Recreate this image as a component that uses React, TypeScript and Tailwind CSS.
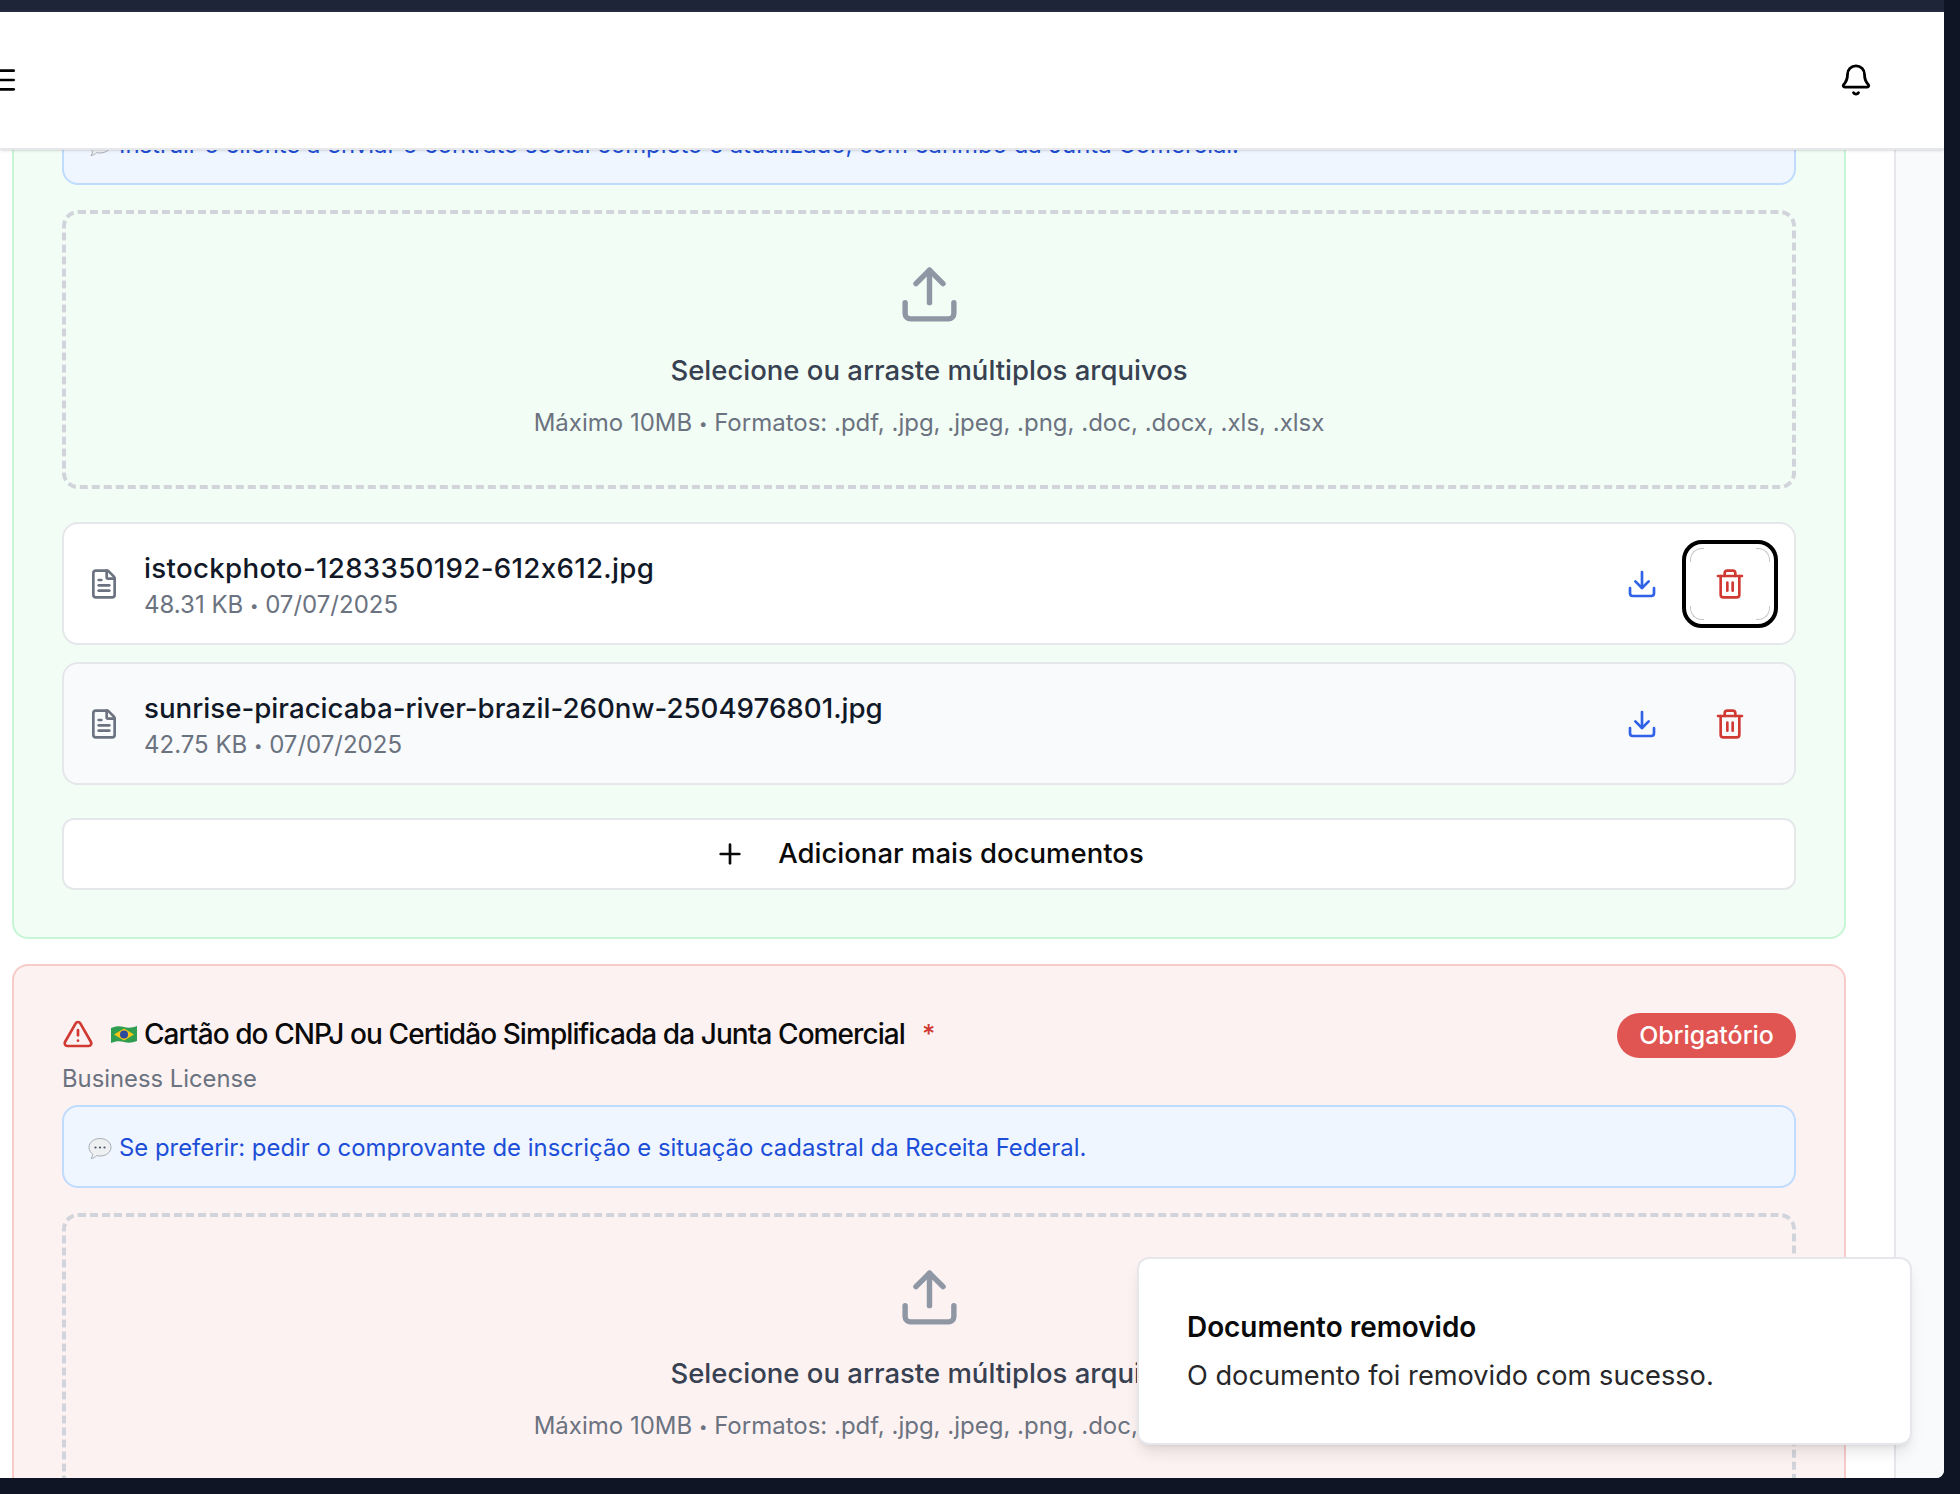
import { Bell, Download, FileText, Menu, Plus, Trash2, TriangleAlert, Upload } from "lucide-react";

const files = [
  { name: "istockphoto-1283350192-612x612.jpg", size: "48.31 KB", date: "07/07/2025", focused: true },
  { name: "sunrise-piracicaba-river-brazil-260nw-2504976801.jpg", size: "42.75 KB", date: "07/07/2025", focused: false },
];

function SpeechBubble() {
  return (
    <svg width="24" height="24" viewBox="0 0 24 24" className="shrink-0">
      <path d="M12 2.500c6 0 11 3.800 11 8.800s-5 8.700-11 8.700c-1.200 0-2.300-.1-3.300-.4-1.400 1.500-3.400 2.600-5.700 2.900 1-1.200 1.600-2.600 1.700-4.300C2.500 16.600 1 14.100 1 11.300 1 6.300 6 2.500 12 2.500z" fill="#eef0f2" stroke="#a8aeb5" strokeWidth="1" />
      <circle cx="7.500" cy="11.500" r="1.100" fill="#4b5563" />
      <circle cx="12" cy="11.500" r="1.100" fill="#4b5563" />
      <circle cx="16.500" cy="11.500" r="1.100" fill="#4b5563" />
    </svg>
  );
}

function BrazilFlag() {
  return (
    <svg width="26" height="19" viewBox="0 0 26 19" className="shrink-0">
      <path d="M0 3c5-2 9-2 13-1s8 1 13-1v15c-5 2-9 2-13 1s-8-1-13 1z" fill="#2f9e4f" />
      <path d="M13 3.500 23 9.500 13 15.500 3 9.500z" fill="#f5c518" />
      <circle cx="13" cy="9.500" r="4" fill="#2b4a9b" />
    </svg>
  );
}

function Dot() {
  return <span className="text-[15px] align-[2px]">•</span>;
}

function DropZone() {
  return (
    <div className="flex h-[279px] shrink-0 flex-col items-center rounded-2xl border-4 border-dashed border-[#d1d5db] pt-[48px]">
      <Upload size={65} strokeWidth={2} className="text-[#8f97a5]" />
      <p className="mt-[25px] text-[27.500px] leading-[36px] font-medium text-[#374151]">
        Selecione ou arraste múltiplos arquivos
      </p>
      <p className="mt-[17px] text-[24px] leading-[36px] text-[#6b7280]">
        Máximo 10MB <Dot /> Formatos: .pdf, .jpg, .jpeg, .png, .doc, .docx, .xls, .xlsx
      </p>
    </div>
  );
}

function CornerMarks() {
  return (
    <>
      <span className="absolute top-0 left-0 size-[14px] rounded-tl-xl border-t border-l border-[#c8c8c8]" />
      <span className="absolute top-0 right-0 size-[14px] rounded-tr-xl border-t border-r border-[#c8c8c8]" />
      <span className="absolute bottom-0 left-0 size-[14px] rounded-bl-xl border-b border-l border-[#c8c8c8]" />
      <span className="absolute right-0 bottom-0 size-[14px] rounded-br-xl border-r border-b border-[#c8c8c8]" />
    </>
  );
}

function FileRow({ name, size, date, focused }: { name: string; size: string; date: string; focused: boolean }) {
  return (
    <div className={`flex h-[123px] items-center rounded-2xl border-2 border-[#e5e7eb] px-[24px] ${focused ? "bg-white" : "bg-[#f9fafb]"}`}>
      <FileText size={32} className="shrink-0 text-[#6b7280]" />
      <div className="ml-[24px] flex-1 pt-[6px]">
        <p className={`text-[27.700px] leading-[36px] font-medium text-[#111827] ${focused ? "tracking-[0.3px]" : ""}`}>{name}</p>
        <p className="mt-[1px] text-[24px] leading-[36px] text-[#6b7280]">
          {size} <Dot /> {date}
        </p>
      </div>
      <div className="flex gap-2">
        <button className="flex h-[72px] w-[80px] items-center justify-center text-[#2f62e6]">
          <Download size={32} />
        </button>
        <button className={`relative flex h-[72px] w-[80px] items-center justify-center rounded-xl text-[#d03a33] ${focused ? "outline-4 outline-offset-4 outline-black" : ""}`}>
          <Trash2 size={32} />
          {focused && <CornerMarks />}
        </button>
      </div>
    </div>
  );
}

export default function App() {
  return (
    <div className="relative h-[1494px] w-[1960px] overflow-hidden bg-[#0f1524] pr-4 pb-4 font-['Inter',sans-serif] [font-feature-settings:'calt'_0]">
      <div className="h-3 border-b-2 border-[#262c3e] bg-[#1e2538]" />
      <div className="relative flex h-[1466px] flex-col overflow-hidden rounded-br-lg bg-white">
        <header className="relative z-10 flex h-[138px] shrink-0 items-center justify-between border-b-2 border-[#e5e7eb] bg-white pr-[71px] shadow-sm">
          <Menu size={32} className="-ml-[13px] text-black" />
          <Bell size={34} className="text-black" />
        </header>

        <div className="flex min-h-0 flex-1">
          <main className="w-[1894px] shrink-0 pr-[48px] pl-3">
            <section className="-mt-[50px] flex flex-col rounded-b-2xl border-2 border-[#c6f6d5] bg-[#f2fdf5] px-12 pb-[47px]">
              <div className="flex h-[83px] items-center gap-[7px] rounded-2xl border-2 border-[#bfdbfe] bg-[#eff6ff] px-6 pt-[2px]">
                <SpeechBubble />
                <span className="text-[23.880px] text-[#1d4ed8]">
                  Instruir o cliente a enviar o contrato social completo e atualizado, com carimbo da Junta Comercial.
                </span>
              </div>
              <div className="mt-[25px]">
                <DropZone />
              </div>
              <div className="mt-[33px] flex flex-col gap-[17px]">
                {files.map((file) => (
                  <FileRow key={file.name} {...file} />
                ))}
              </div>
              <button className="mt-[33px] flex h-[72px] items-center justify-center gap-8 rounded-xl border-2 border-[#e5e7eb] bg-white text-[27.500px] font-medium text-[#0a0a0a]">
                <Plus size={32} />
                Adicionar mais documentos
              </button>
            </section>

            <section className="mt-[25px] flex flex-col rounded-2xl border-2 border-[#f8caca] bg-[#fdf2f2] px-12 pt-[47px]">
              <div className="flex h-[45px] items-center justify-between">
                <div className="-mt-[3px] flex items-center">
                  <TriangleAlert size={32} className="text-[#d03a33]" />
                  <span className="ml-[17px]">
                    <BrazilFlag />
                  </span>
                  <h3 className="ml-[7px] text-[28px] font-medium tracking-[-0.033em] text-[#0a0a0a]">
                    Cartão do CNPJ ou Certidão Simplificada da Junta Comercial
                  </h3>
                  <span className="ml-[17px] text-[25.600px] font-medium text-[#d03a33]">*</span>
                </div>
                <span className="flex h-[45px] w-[179px] items-center justify-center rounded-full bg-[#e05552] text-[24.900px] font-medium text-white">
                  Obrigatório
                </span>
              </div>
              <p className="mt-[3px] text-[23.800px] leading-[36px] text-[#6b7280]">Business License</p>
              <div className="mt-[8px] flex h-[83px] items-center gap-[7px] rounded-2xl border-2 border-[#bfdbfe] bg-[#eff6ff] px-6 pt-[2px]">
                <SpeechBubble />
                <span className="text-[23.880px] text-[#1d4ed8]">
                  Se preferir: pedir o comprovante de inscrição e situação cadastral da Receita Federal.
                </span>
              </div>
              <div className="mt-[25px]">
                <DropZone />
              </div>
            </section>
          </main>
          <aside className="flex-1 border-l-2 border-[#e5e7eb] bg-[#f9fafb]" />
        </div>

        <div className="absolute top-[1245px] left-[1137px] z-20 flex h-[188px] w-[775px] flex-col justify-center rounded-xl border-2 border-[#e5e7eb] bg-white px-[48px] shadow-lg">
          <p className="text-[27.900px] leading-[36px] font-semibold text-[#0a0a0a]">Documento removido</p>
          <p className="mt-[13px] text-[27.200px] leading-[36px] text-[#27272a]">O documento foi removido com sucesso.</p>
        </div>
      </div>
    </div>
  );
}
